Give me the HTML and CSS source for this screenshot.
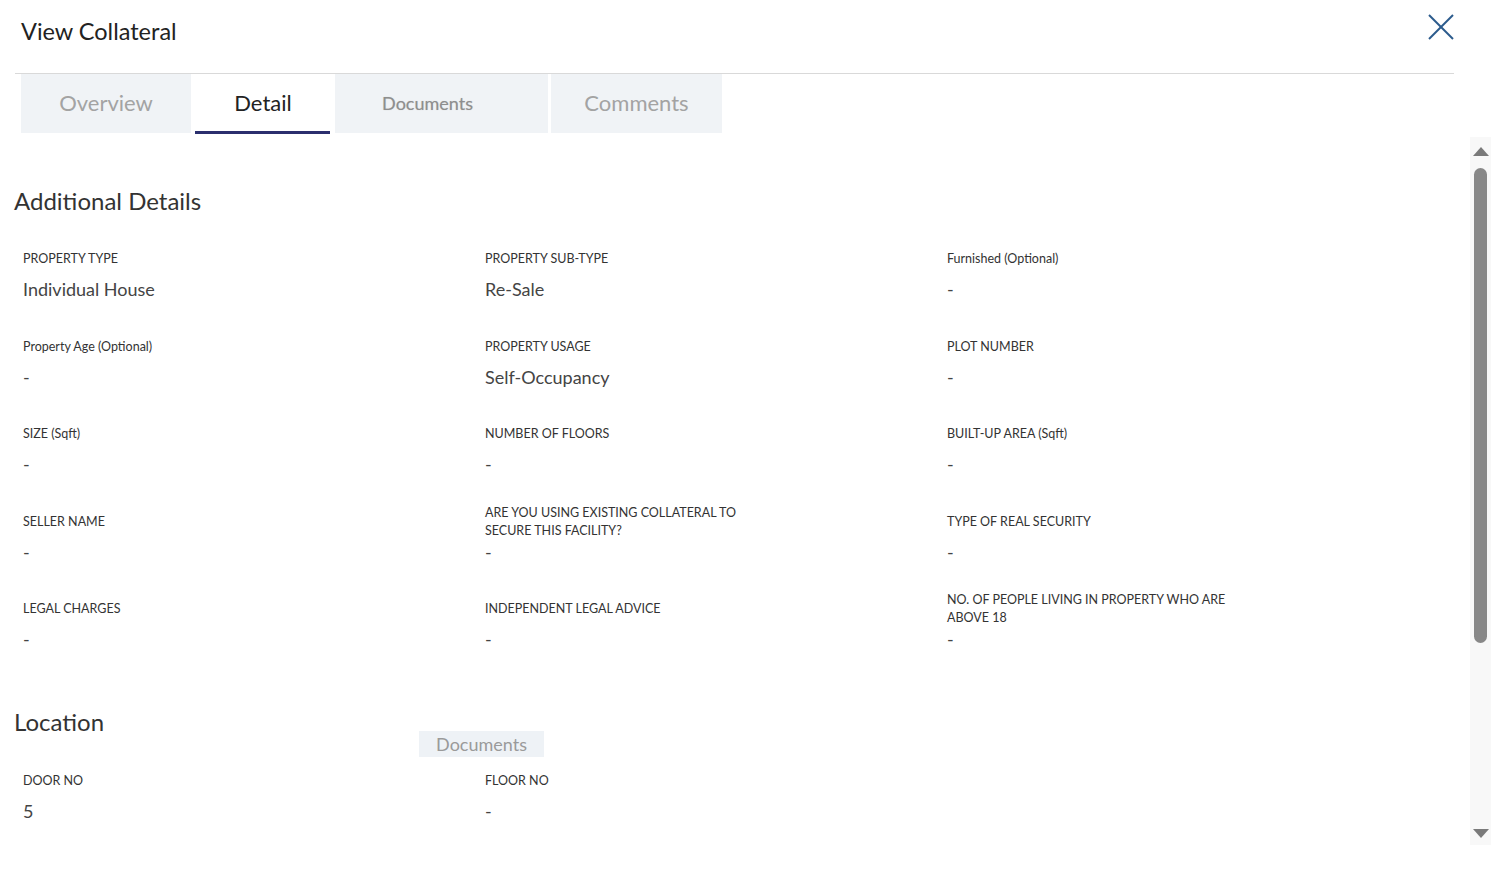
FILE: index.html
```html
<!DOCTYPE html>
<html lang="en">
<head>
  <meta charset="UTF-8">
  <meta name="viewport" content="width=device-width, initial-scale=1.0">
  <title>View Collateral</title>
  <link rel="stylesheet" href="styles.css">
</head>
<body>
  <div class="modal">
    <!-- Header -->
    <div class="modal-header">
      <h2 class="modal-title">View Collateral</h2>
      <button class="close-btn" aria-label="Close">
        <svg viewBox="0 0 26 26" xmlns="http://www.w3.org/2000/svg">
          <line x1="1" y1="1" x2="25" y2="25" />
          <line x1="25" y1="1" x2="1" y2="25" />
        </svg>
      </button>
    </div>

    <!-- Tabs -->
    <div class="tabs">
      <div class="tab tab-overview">Overview</div>
      <div class="tab tab-detail active">Detail</div>
      <div class="tab tab-documents">Documents</div>
      <div class="tab tab-comments">Comments</div>
    </div>

    <!-- Body -->
    <div class="modal-body">
      <div class="content">
        <h3 class="section-title">Additional Details</h3>
        <div class="grid">
          <div class="field"><div class="label">PROPERTY TYPE</div><div class="value">Individual House</div></div>
          <div class="field"><div class="label">PROPERTY SUB-TYPE</div><div class="value">Re-Sale</div></div>
          <div class="field"><div class="label">Furnished (Optional)</div><div class="value">-</div></div>

          <div class="field"><div class="label">Property Age (Optional)</div><div class="value">-</div></div>
          <div class="field"><div class="label">PROPERTY USAGE</div><div class="value">Self-Occupancy</div></div>
          <div class="field"><div class="label">PLOT NUMBER</div><div class="value">-</div></div>

          <div class="field"><div class="label">SIZE (Sqft)</div><div class="value">-</div></div>
          <div class="field"><div class="label">NUMBER OF FLOORS</div><div class="value">-</div></div>
          <div class="field"><div class="label">BUILT-UP AREA (Sqft)</div><div class="value">-</div></div>

          <div class="field"><div class="label">SELLER NAME</div><div class="value">-</div></div>
          <div class="field"><div class="label">ARE YOU USING EXISTING COLLATERAL TO SECURE THIS FACILITY?</div><div class="value">-</div></div>
          <div class="field"><div class="label">TYPE OF REAL SECURITY</div><div class="value">-</div></div>

          <div class="field"><div class="label">LEGAL CHARGES</div><div class="value">-</div></div>
          <div class="field"><div class="label">INDEPENDENT LEGAL ADVICE</div><div class="value">-</div></div>
          <div class="field"><div class="label">NO. OF PEOPLE LIVING IN PROPERTY WHO ARE ABOVE 18</div><div class="value">-</div></div>
        </div>

        <h3 class="section-title location-title">Location</h3>
        <div class="grid">
          <div class="field"><div class="label">DOOR NO</div><div class="value">5</div></div>
          <div class="field"><div class="label">FLOOR NO</div><div class="value">-</div></div>
        </div>
      </div>

      <!-- Scrollbar -->
      <div class="scrollbar">
        <div class="arrow arrow-up"></div>
        <div class="track"><div class="thumb"></div></div>
        <div class="arrow arrow-down"></div>
      </div>
    </div>

    <!-- drag ghost of the Documents tab -->
    <div class="drag-ghost">Documents</div>
  </div>
</body>
</html>
```

FILE: styles.css
```css
  body {
    margin: 0;
    font-family: Lato, "Noto Sans", sans-serif;
    background-color: #fff;
    color: #333;
  }
  .modal {
    position: relative;
    width: 1491px;
    height: 887px;
    overflow: hidden;
  }
  .modal-header {
    display: flex;
    justify-content: space-between;
    align-items: center;
    height: 73px;
    margin: 0 37px 0 15px;
    border-bottom: 1px solid #d9d9d9;
  }
  .modal-title {
    margin: 0 0 12px 6px;
    font-size: 23.5px;
    font-weight: 400;
    color: #222;
  }
  .close-btn {
    background: none;
    border: none;
    padding: 0;
    width: 26px;
    height: 26px;
    margin-bottom: 20px;
    cursor: pointer;
  }
  .close-btn svg {
    width: 26px;
    height: 26px;
    stroke: #2b5b8c;
    stroke-width: 2;
  }
  .tabs {
    display: flex;
    margin-left: 21px;
    height: 59px;
  }
  .tab {
    display: flex;
    align-items: center;
    justify-content: center;
    background-color: #f0f3f6;
    color: #a3a3a3;
    font-size: 22px;
    padding-bottom: 2px;
    box-sizing: border-box;
  }
  .tab-overview { width: 170px; }
  .tab-detail { width: 144px; }
  .tab-documents {
    width: 213px;
    margin-right: 3px;
    padding-right: 28px;
    font-size: 18px;
    color: #8e8e8e;
    text-shadow: 0 0 1px #c4c4c4;
  }
  .tab-comments { width: 171px; }
  .tab.active {
    background-color: #fff;
    color: #222;
    position: relative;
  }
  .tab.active::after {
    content: "";
    position: absolute;
    left: 4px;
    right: 5px;
    bottom: -1px;
    height: 3px;
    background-color: #2b2f6e;
  }
  .modal-body {
    display: flex;
    height: 708px;
    margin-top: 4px;
  }
  .content {
    flex: 1;
    overflow: hidden;
    padding: 48px 0 0 14px;
  }
  .section-title {
    margin: 0 0 23px 0;
    font-size: 24px;
    line-height: 32px;
    font-weight: 400;
    color: #333;
  }
  .location-title {
    margin-top: 55px;
    margin-bottom: 24px;
  }
  .grid {
    display: grid;
    grid-template-columns: 462px 462px 462px;
    row-gap: 26.5px;
    padding-left: 9px;
  }
  .label {
    display: flex;
    align-items: center;
    min-height: 36px;
    margin-top: 1px;
    max-width: 290px;
    font-size: 12.5px;
    line-height: 18px;
    color: #333;
  }
  .value {
    font-size: 18px;
    line-height: 24px;
    color: #444;
  }
  .scrollbar {
    width: 21px;
    display: flex;
    flex-direction: column;
    align-items: center;
    background-color: #f8f8f8;
  }
  .arrow {
    width: 0;
    height: 0;
    border-left: 8px solid transparent;
    border-right: 8px solid transparent;
  }
  .arrow-up {
    margin-top: 10px;
    border-bottom: 9px solid #7a7a7a;
  }
  .arrow-down {
    margin-bottom: 7px;
    border-top: 9px solid #7a7a7a;
  }
  .track {
    flex: 1;
    width: 100%;
    display: flex;
    justify-content: center;
    padding-top: 12px;
  }
  .thumb {
    width: 13px;
    height: 475px;
    background-color: #888;
    border-radius: 7px;
  }
  .drag-ghost {
    position: absolute;
    left: 419px;
    top: 731px;
    width: 125px;
    height: 26px;
    display: flex;
    align-items: center;
    justify-content: center;
    background-color: #eef2f6;
    color: #9a9a9a;
    font-size: 18px;
  }
```
